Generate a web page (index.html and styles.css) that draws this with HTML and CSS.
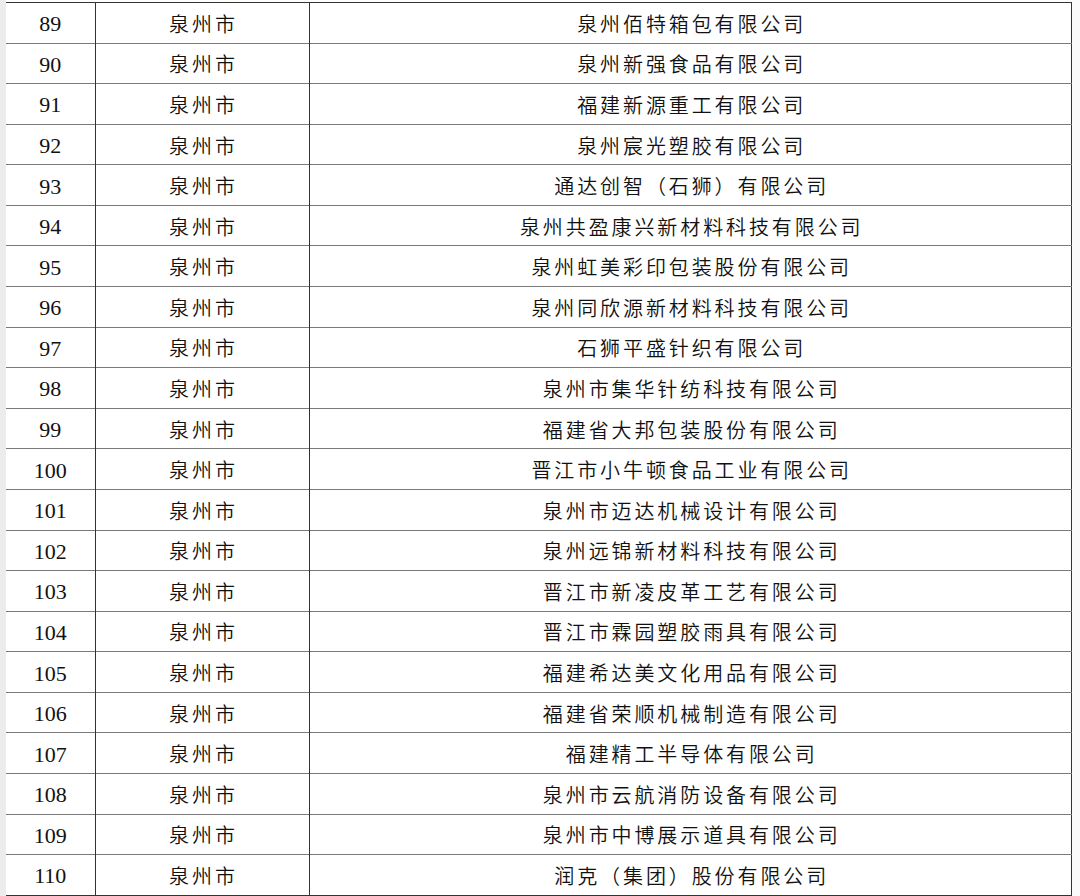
FILE: index.html
```html
<!DOCTYPE html>
<html lang="zh-CN">
<head>
<meta charset="utf-8">
<title>名单</title>
<link rel="stylesheet" href="styles.css">
</head>
<body>
<div class="page">
  <div class="gutter"></div>
  <table class="list">
    <colgroup><col class="c-no"><col class="c-city"><col class="c-name"></colgroup>
    <tbody>
      <tr><td class="no">89</td><td class="city">泉州市</td><td class="name">泉州佰特箱包有限公司</td></tr>
      <tr><td class="no">90</td><td class="city">泉州市</td><td class="name">泉州新强食品有限公司</td></tr>
      <tr><td class="no">91</td><td class="city">泉州市</td><td class="name">福建新源重工有限公司</td></tr>
      <tr><td class="no">92</td><td class="city">泉州市</td><td class="name">泉州宸光塑胶有限公司</td></tr>
      <tr><td class="no">93</td><td class="city">泉州市</td><td class="name">通达创智（石狮）有限公司</td></tr>
      <tr><td class="no">94</td><td class="city">泉州市</td><td class="name">泉州共盈康兴新材料科技有限公司</td></tr>
      <tr><td class="no">95</td><td class="city">泉州市</td><td class="name">泉州虹美彩印包装股份有限公司</td></tr>
      <tr><td class="no">96</td><td class="city">泉州市</td><td class="name">泉州同欣源新材料科技有限公司</td></tr>
      <tr><td class="no">97</td><td class="city">泉州市</td><td class="name">石狮平盛针织有限公司</td></tr>
      <tr><td class="no">98</td><td class="city">泉州市</td><td class="name">泉州市集华针纺科技有限公司</td></tr>
      <tr><td class="no">99</td><td class="city">泉州市</td><td class="name">福建省大邦包装股份有限公司</td></tr>
      <tr><td class="no">100</td><td class="city">泉州市</td><td class="name">晋江市小牛顿食品工业有限公司</td></tr>
      <tr><td class="no">101</td><td class="city">泉州市</td><td class="name">泉州市迈达机械设计有限公司</td></tr>
      <tr><td class="no">102</td><td class="city">泉州市</td><td class="name">泉州远锦新材料科技有限公司</td></tr>
      <tr><td class="no">103</td><td class="city">泉州市</td><td class="name">晋江市新凌皮革工艺有限公司</td></tr>
      <tr><td class="no">104</td><td class="city">泉州市</td><td class="name">晋江市霖园塑胶雨具有限公司</td></tr>
      <tr><td class="no">105</td><td class="city">泉州市</td><td class="name">福建希达美文化用品有限公司</td></tr>
      <tr><td class="no">106</td><td class="city">泉州市</td><td class="name">福建省荣顺机械制造有限公司</td></tr>
      <tr><td class="no">107</td><td class="city">泉州市</td><td class="name">福建精工半导体有限公司</td></tr>
      <tr><td class="no">108</td><td class="city">泉州市</td><td class="name">泉州市云航消防设备有限公司</td></tr>
      <tr><td class="no">109</td><td class="city">泉州市</td><td class="name">泉州市中博展示道具有限公司</td></tr>
      <tr><td class="no">110</td><td class="city">泉州市</td><td class="name">润克（集团）股份有限公司</td></tr>
    </tbody>
  </table>
</div>
</body>
</html>
```

FILE: styles.css
```css
html, body {
  margin: 0;
  padding: 0;
  background: #ffffff;
}
body {
  width: 1080px;
  height: 896px;
  overflow: hidden;
}
.page {
  display: flex;
  align-items: flex-start;
  padding-top: 2px;
  height: 894px;
  background: linear-gradient(to right, #ffffff 0, #ffffff 1071px, #fafafa 1072px);
}
.gutter {
  width: 6px;
  flex: none;
  align-self: stretch;
  margin-top: -2px;
  background: #ececec;
}
.list {
  border-collapse: collapse;
  table-layout: fixed;
  width: 1066px;
  border-top: 1px solid #333333;
  border-bottom: 1px solid #333333;
  border-right: 1px solid #333333;
  color: #111111;
}
.c-no { width: 89px; }
.c-city { width: 214px; }
.c-name { width: auto; }
.list tr { height: 40.58px; }
.list td {
  padding: 0;
  text-align: center;
  vertical-align: middle;
  border-top: 1px solid #7a7a7a;
  border-left: 1px solid #333333;
  line-height: 1;
}
.list tr:first-child td { border-top: none; }
.list td.no {
  border-left: none;
  font-family: "Liberation Serif", "Times New Roman", serif;
  font-size: 22px;
  padding-top: 3px;
}
.list td.city,
.list td.name {
  font-family: "Noto Sans CJK SC", "Noto Sans", sans-serif;
  font-size: 20px;
  font-weight: 350;
  letter-spacing: 2.9px;
  text-indent: 2.9px;
  padding-top: 2px;
}
```
